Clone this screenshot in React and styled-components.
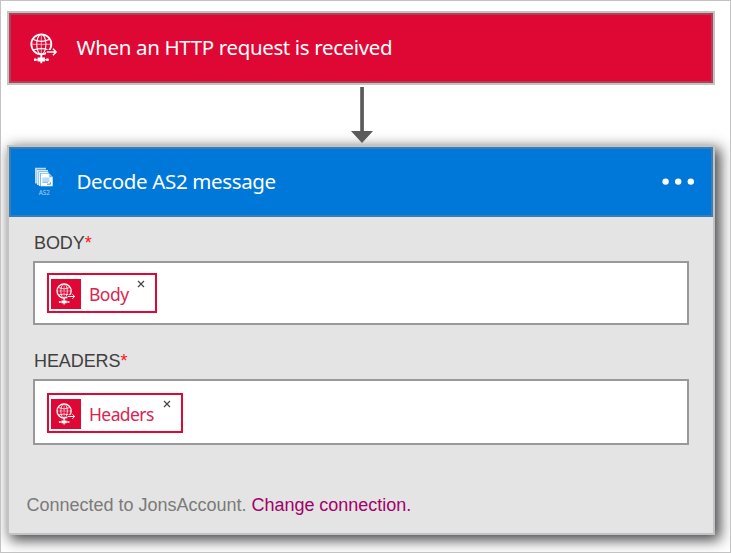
import React from "react";
import styled, { createGlobalStyle } from "styled-components";

const GlobalStyle = createGlobalStyle`
  *, *::before, *::after { box-sizing: border-box; }
  body { margin: 0; background: #fff; }
`;

const uiFont = `"Noto Sans", "Open Sans", sans-serif`;
const bodyFont = `"Liberation Sans", Arial, sans-serif`;

const Canvas = styled.main`
  width: 731px;
  height: 553px;
  padding: 10px 15px 0 6px;
  border: 1px solid #c3c3c3;
  background: #fff;
  overflow: hidden;
  display: flex;
  flex-direction: column;
`;

const Card = styled.section`
  border: 2px solid #c3c3c3;
  background: #e4e4e4;
  box-shadow: ${(p) => (p.$raised ? "4px 4px 13px 1px rgba(20, 20, 24, 0.8)" : "none")};
  height: ${(p) => p.$height}px;
  flex: none;
`;

const CardHeader = styled.header`
  display: flex;
  align-items: center;
  height: 70px;
  padding: 0 17px 0 18px;
  background: ${(p) => p.$color};
  border: 2px solid ${(p) => p.$edge};
`;

const HeaderIcon = styled.span`
  display: flex;
  width: 48px;
  padding-left: ${(p) => p.$inset || 0}px;
  flex: none;
`;

const Title = styled.h2`
  margin: 0 0 2px -0.5px;
  flex: 1;
  font: 400 20.5px/28px ${uiFont};
  letter-spacing: ${(p) => p.$tracking}px;
  white-space: nowrap;
  color: #fff;
`;

const MenuButton = styled.button`
  display: flex;
  padding: 0;
  border: 0;
  background: none;
`;

const Connector = styled.div`
  display: flex;
  justify-content: center;
  height: 60px;
  padding: 2px 0 0 1px;
  flex: none;
  z-index: 1;
`;

const Form = styled.div`
  display: flex;
  flex-direction: column;
  padding: 16px 24px 0;
`;

const Label = styled.label`
  height: 28px;
  padding-left: 1px;
  font: 400 18px/20px ${bodyFont};
  letter-spacing: -0.08px;
  color: #404040;
`;

const Required = styled.span`
  color: #fb1414;
`;

const Field = styled.div`
  display: flex;
  align-items: flex-start;
  height: ${(p) => p.$height}px;
  margin-bottom: ${(p) => p.$gap}px;
  padding: ${(p) => p.$top}px 12px 0;
  border: 2px solid #999;
  background: #fff;
`;

const Token = styled.span`
  display: flex;
  width: ${(p) => p.$width}px;
  height: 40px;
  padding: 4px 10px 0 2px;
  border: 2px solid #df0834;
`;

const TokenIcon = styled.span`
  display: flex;
  align-items: center;
  justify-content: center;
  width: 30px;
  height: 30px;
  flex: none;
  background: #df0834;
`;

const TokenText = styled.span`
  flex: 1;
  padding: 3px 0 0 8px;
  font: 400 17.5px/24px ${uiFont};
  letter-spacing: ${(p) => p.$tracking}px;
  white-space: nowrap;
  color: #dc2450;
`;

const Remove = styled.svg`
  width: 8px;
  height: 8px;
  margin-top: 1px;
  flex: none;
`;

const Footer = styled.footer`
  padding: 0 17.5px;
  font: 400 18px/20px ${bodyFont};
  letter-spacing: -0.01px;
  color: #7a7a7a;
`;

const Change = styled.a`
  color: #a3006a;
`;

function Globe({ width = 28, height = 31 }) {
  return (
    <svg width={width} height={height} viewBox="0 0 28 31" fill="none" stroke="#fff">
      <circle cx="11.3" cy="11.3" r="10" strokeWidth="1.8" />
      <ellipse cx="11.3" cy="11.3" rx="4.6" ry="10" strokeWidth="1.1" />
      <path d="M11.3 1.5v20M1.5 11.3h19.6" strokeWidth="0.8" opacity="0.75" />
      <path d="M3.4 6.5Q11.3 10.2 19.2 6.5M3.2 17Q11.3 14.4 17.5 16.5" strokeWidth="1.2" />
      <path d="M16 19h11" stroke="#df0834" strokeWidth="4" />
      <path d="M16.8 19h9.6M22.9 15.8l3.3 3.2-3.3 3.2" strokeWidth="1.4" />
      <path d="M11.3 21v4" strokeWidth="1.8" />
      <path d="M4 26.8h15" strokeWidth="1" />
      <path d="M4 25.6h2.4v2.4H4zM7.6 24.6h7.4v4H7.6zM16.2 25.6h2.4v2.4h-2.4zM10.4 28.6h1.8v1.6h-1.8z" fill="#fff" stroke="none" />
    </svg>
  );
}

const SmallLabel = styled.text`
  font: 400 6.3px ${uiFont};
  fill: #a9d2f4;
`;

function Documents() {
  return (
    <svg width="30" height="30" viewBox="0 0 30 30">
      <path d="M6 0.8h11v1.7H7.9V16.6H6z" fill="#b8daf6" />
      <path d="M8 2.9h11v1.5H9.7V18H8z" fill="#d4e9fa" />
      <path d="M9.9 4.8h9.6v1.4h-8.2V19H9.9z" fill="#e9f4fd" />
      <path d="M11.7 6.6h8.6l3.4 3.5v9.1H11.7z" fill="#fff" />
      <path d="M20.3 7v3.2h3.1z" fill="#65ade9" />
      <path d="M13.4 10.6h7.2v4.4h-7.2z" fill="#b9daf6" />
      <path d="M13.4 15.4h5.6" stroke="#82baea" strokeWidth="1" />
      <path d="M18 17.2h3.4v-2" fill="none" stroke="#398fdc" strokeWidth="0.9" />
      <SmallLabel x="9.8" y="28.2">AS2</SmallLabel>
    </svg>
  );
}

function MoreDots() {
  return (
    <svg width="33" height="8" viewBox="0 0 33 8" fill="#fff">
      <circle cx="4.6" cy="3.6" r="3.2" />
      <circle cx="17.2" cy="3.6" r="3.2" />
      <circle cx="29.8" cy="3.6" r="3.2" />
    </svg>
  );
}

function DynamicToken({ width, tracking, children }) {
  return (
    <Token $width={width}>
      <TokenIcon>
        <Globe width={20} height={22} />
      </TokenIcon>
      <TokenText $tracking={tracking}>{children}</TokenText>
      <Remove viewBox="0 0 8 8">
        <path d="M1 1l6 6M7 1L1 7" stroke="#454545" strokeWidth="1.2" />
      </Remove>
    </Token>
  );
}

export default function App() {
  return (
    <>
      <GlobalStyle />
      <Canvas>
        <Card $height={74}>
          <CardHeader $color="#df0834" $edge="#b04058">
            <HeaderIcon $inset={1}><Globe /></HeaderIcon>
            <Title $tracking={-0.36}>When an HTTP request is received</Title>
          </CardHeader>
        </Card>
        <Connector>
          <svg width="22" height="56" viewBox="0 0 22 56">
            <path d="M9.2 0h3.7v44H22L11 56 0 44h9.2z" fill="#5a5a5a" />
          </svg>
        </Connector>
        <Card $height={390} $raised>
          <CardHeader $color="#0078d9" $edge="#3c7cb4">
            <HeaderIcon><Documents /></HeaderIcon>
            <Title $tracking={-0.36}>Decode AS2 message</Title>
            <MenuButton aria-label="More options"><MoreDots /></MenuButton>
          </CardHeader>
          <Form>
            <Label>BODY<Required>*</Required></Label>
            <Field $height={64} $gap={26} $top={10}>
              <DynamicToken width={110} tracking={-0.5}>Body</DynamicToken>
            </Field>
            <Label>HEADERS<Required>*</Required></Label>
            <Field $height={66} $gap={50} $top={12}>
              <DynamicToken width={136} tracking={-0.6}>Headers</DynamicToken>
            </Field>
          </Form>
          <Footer>Connected to JonsAccount. <Change>Change connection.</Change></Footer>
        </Card>
      </Canvas>
    </>
  );
}
